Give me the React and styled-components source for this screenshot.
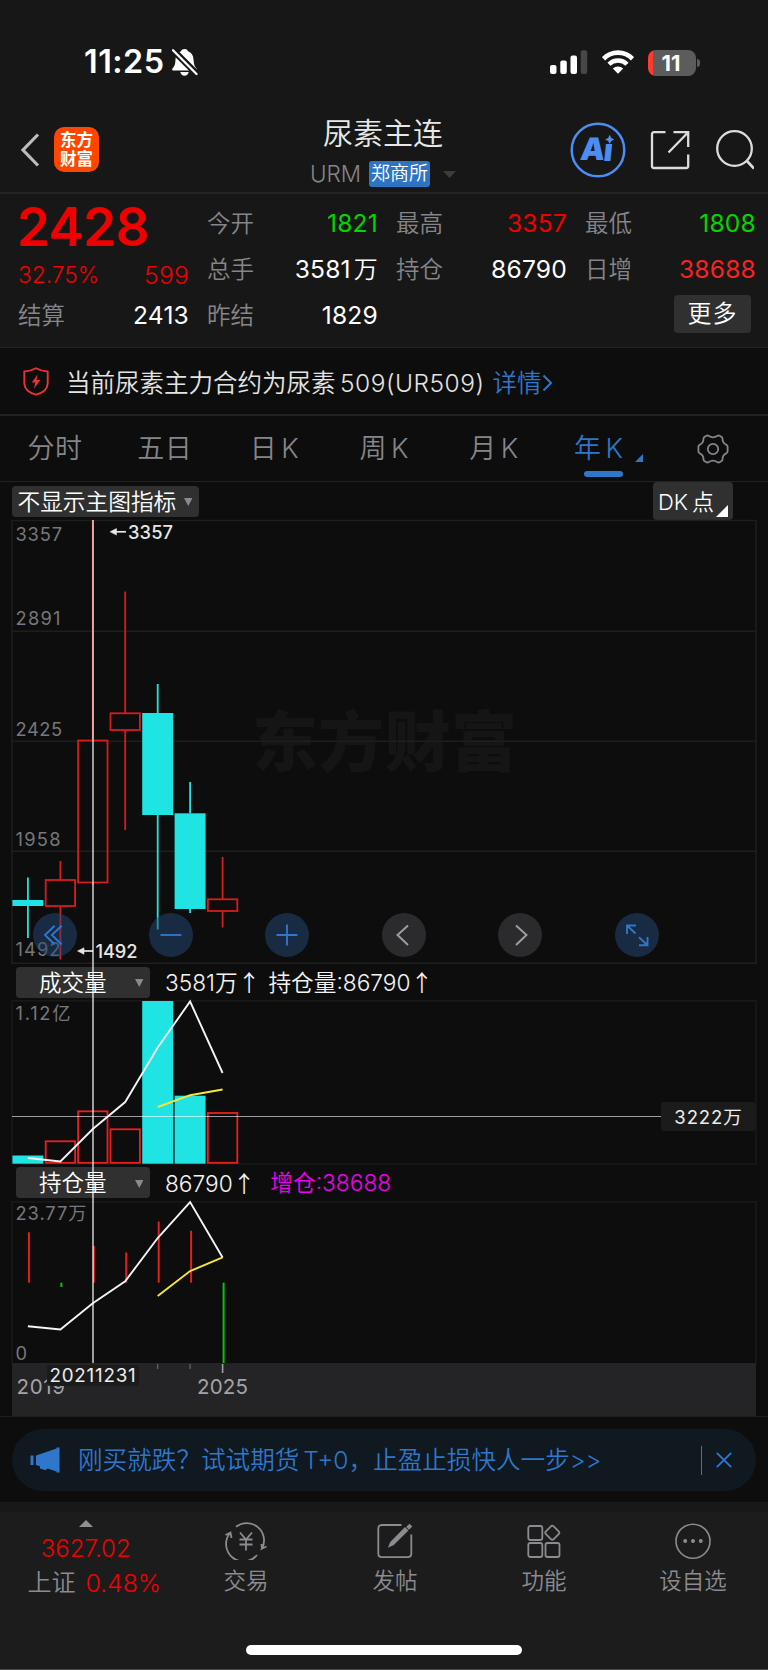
import styled, { createGlobalStyle } from "styled-components";

const X = [27.9, 60.4, 92.8, 125.2, 157.7, 190.1, 222.6];

const candles = [
  { up: false, high: 877.5, top: 900, bottom: 906, low: 938 },
  { up: true, high: 861, top: 880, bottom: 906, low: 959.5 },
  { up: true, high: 520, top: 740.5, bottom: 882.5, low: 885 },
  { up: true, high: 591.5, top: 713.3, bottom: 730, low: 830 },
  { up: false, high: 684, top: 713, bottom: 815, low: 929.5 },
  { up: false, high: 782, top: 813.3, bottom: 909, low: 913 },
  { up: true, high: 857, top: 899.3, bottom: 911, low: 927.5 },
];

const volumes = [
  { up: false, top: 1155.5 },
  { up: true, top: 1141.3 },
  { up: true, top: 1111.3 },
  { up: true, top: 1129.3 },
  { up: false, top: 1001 },
  { up: false, top: 1095.7 },
  { up: true, top: 1113 },
];

const sticks = [
  { up: true, from: 1232.3, to: 1282.7 },
  { up: false, from: 1282.7, to: 1287 },
  { up: true, from: 1246, to: 1282.7 },
  { up: true, from: 1252.5, to: 1282.7 },
  { up: true, from: 1221.5, to: 1282.7 },
  { up: true, from: 1230.7, to: 1282.7 },
  { up: false, from: 1282.7, to: 1363 },
];

const quotes = [
  { label: "今开", value: "1821", color: "#00d600" },
  { label: "最高", value: "3357", color: "#f00000" },
  { label: "最低", value: "1808", color: "#00d600" },
  { label: "总手", value: "3581", unit: "万" },
  { label: "持仓", value: "86790" },
  { label: "日增", value: "38688", color: "#f92222" },
  { label: "昨结", value: "1829" },
];

const tabs = ["分时", "五日", "日K", "周K", "月K", "年K"];

const linePoints = (ys, start = 0) =>
  ys.map((y, i) => `${X[i + start]},${y}`).join(" ");

const Label = ({ x, y, w, size = 18.3, fill = "#77777c", weight, children }) => (
  <text
    x={x}
    y={y}
    fontSize={size}
    fill={fill}
    fontWeight={weight}
    textLength={w}
    lengthAdjust="spacing"
  >
    {children}
  </text>
);

const MutedBell = () => (
  <svg width="26" height="29" viewBox="0 0 26 29">
    <path
      d="M12.5 1c1.8 0 3 .9 3.4 2.3 3.7 1.3 5.3 4.3 5.6 8 .3 5 1 6.8 2.6 8.6 1.4 1.5.6 2.6-.6 2.6h-22c-1.3 0-2-1.2-.6-2.6 1.7-1.7 2.4-3.6 2.6-8.6.2-3.7 1.9-6.7 5.6-8C9.5 1.9 10.7 1 12.5 1z"
      fill="#fff"
    />
    <path d="M8.3 24h8.4c-.4 2.3-2 3.7-4.2 3.7S8.7 26.3 8.3 24z" fill="#fff" />
    <path d="M-1 .2L27 28" stroke="#171717" strokeWidth="6.5" />
    <path d="M1 2.3L24.5 26" stroke="#fff" strokeWidth="2.3" strokeLinecap="round" />
  </svg>
);

const Signal = () => (
  <svg width="38" height="25" viewBox="0 0 38 25">
    <rect x="0" y="15" width="6.5" height="9" rx="2" fill="#fff" />
    <rect x="10.3" y="10.5" width="6.5" height="13.5" rx="2" fill="#fff" />
    <rect x="20.5" y="5.5" width="6.5" height="18.5" rx="2" fill="#fff" />
    <rect x="30.7" y="0.3" width="6.5" height="23.7" rx="2" fill="#474747" />
  </svg>
);

const Wifi = () => (
  <svg width="32" height="25" viewBox="0 0 32 25" fill="none" stroke="#fff">
    <path d="M1.5 8.8C9.5 .6 22.5 .6 30.5 8.8" strokeWidth="4.6" />
    <path d="M7 14.3C12 9.3 20 9.3 25 14.3" strokeWidth="4.4" />
    <path d="M10.8 18.5c3-2.7 7.4-2.7 10.4 0L16 23.8z" fill="#fff" stroke="none" />
  </svg>
);

const Gear = () => (
  <svg width="32" height="30" viewBox="-16 -15 32 30" fill="none" stroke="#85858a" strokeWidth="1.8">
    <path
      strokeLinejoin="round"
      d="M-4.5-13.2Q0-10.2 4.5-13.2Q5.5-13.8 6.6-13.2L8.6-12Q9.5-11.4 9.5-10.3Q9.5-5.8 13.6-4.1Q14.6-3.5 14.6-2.3V2.3Q14.6 3.5 13.6 4.1Q9.5 5.8 9.5 10.3Q9.5 11.4 8.6 12L6.6 13.2Q5.5 13.8 4.5 13.2Q0 10.2-4.5 13.2Q-5.5 13.8-6.6 13.2L-8.6 12Q-9.5 11.4-9.5 10.3Q-9.5 5.8-13.6 4.1Q-14.6 3.5-14.6 2.3V-2.3Q-14.6-3.5-13.6-4.1Q-9.5-5.8-9.5-10.3Q-9.5-11.4-8.6-12L-6.6-13.2Q-5.5-13.8-4.5-13.2Z"
    />
    <circle r="5.2" />
  </svg>
);

const Triangle = ({ w, h, color, dir = "down" }) => (
  <svg width={w} height={h} viewBox="0 0 10 10" preserveAspectRatio="none">
    <path
      d={{ down: "M0 0H10L5 10Z", up: "M0 10H10L5 0Z", corner: "M10 0V10H0Z" }[dir]}
      fill={color}
    />
  </svg>
);

const Candle = ({ i, up, high, top, bottom, low }) => (
  <g stroke={up ? "#d61c1c" : "#20e3e3"} strokeWidth="1.8" fill="none">
    <path d={`M${X[i]} ${high}V${top}M${X[i]} ${bottom}V${low}`} />
    {up ? (
      <rect x={X[i] - 14.7} y={top} width="29.4" height={bottom - top} />
    ) : (
      <rect x={X[i] - 15.5} y={top} width="31" height={bottom - top} fill="#20e3e3" stroke="none" />
    )}
  </g>
);

const MainChart = () => (
  <Canvas height={444} viewBox="0 520 768 444">
    <Watermark x="252" y="766" textLength="265">
      东方财富
    </Watermark>
    <path
      d="M12 520.5H756V963.3H12ZM12 631.3H756M12 741.2H756M12 851.3H756"
      fill="none"
      stroke="#1e1e20"
      strokeWidth="1.5"
    />
    {candles.map((c, i) => (
      <Candle key={i} i={i} {...c} />
    ))}
    <Label x="15.5" y="541" w="46.5">3357</Label>
    <Label x="15.5" y="625" w="45">2891</Label>
    <Label x="15.5" y="735.5" w="46.5">2425</Label>
    <Label x="15.5" y="845.5" w="45">1958</Label>
    <Label x="15.5" y="956.3" w="45">1492</Label>
    <g fill="#e6e6e6" stroke="#e6e6e6" strokeWidth="1.7">
      <path d="M113 531.8H126" />
      <path d="M110 531.8L116.5 528.5V535.1Z" strokeWidth="0.5" />
      <path d="M80 951H93" />
      <path d="M77.5 951L84 947.7V954.3Z" strokeWidth="0.5" />
    </g>
    <Label x="128" y="539" w="45" weight="500" fill="#e6e6e6">3357</Label>
    <Label x="95.5" y="957.8" w="42" weight="500" fill="#e6e6e6">1492</Label>
  </Canvas>
);

const VolumeChart = () => (
  <Canvas height={164} viewBox="0 1000 768 164">
    <path d="M12 1000.8H756V1163.8H12Z" fill="none" stroke="#1c1c1e" strokeWidth="1.3" />
    <Label x="15.5" y="1020" w="55">1.12亿</Label>
    {volumes.map(({ up, top }, i) =>
      up ? (
        <rect
          key={i}
          x={X[i] - 14.7}
          y={top}
          width="29.4"
          height={1162.8 - top}
          fill="none"
          stroke="#ec1f1f"
          strokeWidth="1.8"
        />
      ) : (
        <rect key={i} x={X[i] - 15.5} y={top} width="31" height={1163.7 - top} fill="#20e3e3" />
      )
    )}
    <polyline
      points={linePoints([1158, 1161.5, 1129, 1102, 1047.5, 1001.5, 1073])}
      fill="none"
      stroke="#f4f4f4"
      strokeWidth="1.9"
    />
    <polyline
      points={linePoints([1107, 1095.2, 1089.5], 4)}
      fill="none"
      stroke="#f6e63a"
      strokeWidth="1.9"
    />
  </Canvas>
);

const PositionChart = () => (
  <Canvas height={162} viewBox="0 1201 768 162">
    <path d="M12 1363V1201.8H756V1363" fill="none" stroke="#1c1c1e" strokeWidth="1.3" />
    {sticks.map(({ up, from, to }, i) => (
      <path
        key={i}
        d={`M${X[i] + 1} ${from}V${to}`}
        stroke={up ? "#e81d1d" : "#0bc30b"}
        strokeWidth="2"
      />
    ))}
    <polyline
      points={linePoints([1326.3, 1329.5, 1303.3, 1281.3, 1238, 1202, 1257.5])}
      fill="none"
      stroke="#f4f4f4"
      strokeWidth="1.9"
    />
    <polyline
      points={linePoints([1296, 1271, 1257.3], 4)}
      fill="none"
      stroke="#f6e63a"
      strokeWidth="1.9"
    />
    <Label x="15.5" y="1220.3" w="71">23.77万</Label>
    <Label x="15.5" y="1359.5">0</Label>
  </Canvas>
);

const TimeAxis = () => (
  <AxisBand>
    <Canvas height={53} viewBox="0 1363 768 53">
      <path d="M157.7 1364V1369M190.1 1364V1369" stroke="#77777a" />
      <path d="M222.6 1364V1373" stroke="#a0a0a4" strokeWidth="1.6" />
      <Label x="16.5" y="1393.7" w="48.5" size={20.5} fill="#a3a3a8">2019</Label>
      <Label x="197" y="1393.7" w="51" size={20.5} fill="#a3a3a8">2025</Label>
    </Canvas>
  </AxisBand>
);

const controls = [
  { name: "first", blue: true, d: "M21.7 12.7L12 22L21.7 31.5M28.7 12.7L18.8 22L28.7 31.5" },
  { name: "minus", blue: true, d: "M11.5 22H32.5" },
  { name: "plus", blue: true, d: "M11.5 22H32.5M22 11.5V32.5" },
  { name: "prev", d: "M26 12.5L15.5 22L26 32" },
  { name: "next", d: "M18 12.5L28.5 22L18 32" },
  { name: "expand", blue: true, d: "M12 21V12.5H21M12 12.5L20.5 20.5M24 32.3H32.5V24M32.5 32.3L24 24.3" },
];

const App = () => {
  return (
    <Screen>
      <GlobalStyle />
      <StatusBar>
        <Clock>11:25</Clock>
        <MutedBell />
        <StatusIcons>
          <Signal />
          <Wifi />
          <Battery>11</Battery>
        </StatusIcons>
      </StatusBar>

      <Header>
        <HeaderLeft>
          <svg width="20" height="34" viewBox="0 0 20 34" fill="none" stroke="#bcbcbc" strokeWidth="3.2">
            <path d="M18 1.5L3 17L18 32.5" />
          </svg>
          <Logo>
            <span>东方</span>
            <span>财富</span>
          </Logo>
        </HeaderLeft>
        <TitleBlock>
          <Title>尿素主连</Title>
          <SubTitle>
            URM
            <Exchange>郑商所</Exchange>
            <Triangle w={13} h={7} color="#3c3c3d" />
          </SubTitle>
        </TitleBlock>
        <HeaderRight>
          <svg width="56" height="56" viewBox="0 0 56 56">
            <circle cx="28" cy="28" r="26.3" fill="none" stroke="#4c8df3" strokeWidth="2.5" />
            <g transform="translate(4 0) skewX(-6)">
              <AiText x="9.5" y="38.5">A</AiText>
              <AiText x="33" y="39.5">ı</AiText>
            </g>
            <path d="M39.7 12.8L41.3 15.9L44.3 17.4L41.3 18.9L39.7 22L38.1 18.9L35.1 17.4L38.1 15.9Z" fill="#4c8df3" />
          </svg>
          <svg width="40" height="40" viewBox="0 0 40 40" fill="none" stroke="#dcdcdc" strokeWidth="2.3">
            <path d="M15.5 2.2H4Q2 2.2 2 4.2V36Q2 38 4 38H36.2Q38.2 38 38.2 36V24.5" />
            <path d="M23.5 2.2H38.2V17M38.2 2.2L18.5 22.5" />
          </svg>
          <svg width="40" height="40" viewBox="-1.5 0 40 40" fill="none" stroke="#dcdcdc" strokeWidth="2.3">
            <circle cx="19" cy="18.5" r="17.3" />
            <path d="M31 30.5L38.5 38.5" strokeWidth="2.6" />
          </svg>
        </HeaderRight>
      </Header>

      <QuotePanel>
        <PriceColumn>
          <Price>2428</Price>
          <Change>
            <span>32.75%</span>
            <Diff>599</Diff>
          </Change>
          <Quote>
            <QuoteName>结算</QuoteName>
            <QuoteValue>2413</QuoteValue>
          </Quote>
        </PriceColumn>
        <QuoteGrid>
          {quotes.map(({ label, value, unit, color }) => (
            <Quote key={label}>
              <QuoteName>{label}</QuoteName>
              <QuoteValue $color={color}>
                {value}
                {unit && <Unit>{unit}</Unit>}
              </QuoteValue>
            </Quote>
          ))}
          <MoreCell>
            <MoreButton>更多</MoreButton>
          </MoreCell>
        </QuoteGrid>
      </QuotePanel>

      <Notice>
        <svg width="26" height="29" viewBox="0 0 26 29" fill="none" stroke="#ee3030" strokeWidth="1.9">
          <path
            d="M13 1.3C9.5 3.3 5.5 4.3 1.3 4.5V16C1.3 21.5 6 25.8 13 27.7C20 25.8 24.7 21.5 24.7 16V4.5C20.5 4.3 16.5 3.3 13 1.3Z"
            strokeLinejoin="round"
          />
          <path d="M14.5 7.5L8.7 15.5H12.3L11 21.8L17.3 13H13.5Z" fill="#ee3030" stroke="none" />
        </svg>
        <NoticeText>
          当前尿素主力合约为尿素<Contract>509(UR509)</Contract>
        </NoticeText>
        <DetailLink>
          详情
          <svg width="11" height="18" viewBox="0 0 11 18" fill="none" stroke="#2e77cb" strokeWidth="2">
            <path d="M1.5 1.5L9 9L1.5 16.5" />
          </svg>
        </DetailLink>
      </Notice>

      <Tabs>
        {tabs.map((tab) => (
          <Tab key={tab} $active={tab === "年K"}>
            {tab[0]}
            <TabTail $latin={tab[1] === "K"}>{tab[1]}</TabTail>
            {tab === "年K" && (
              <TabMark>
                <Triangle w={8} h={8} color="#2e77cb" dir="corner" />
              </TabMark>
            )}
          </Tab>
        ))}
        <Tab>
          <Gear />
        </Tab>
      </Tabs>

      <ChartArea>
        <IndicatorBar>
          <IndicatorButton>
            不显示主图指标
            <Triangle w={8.5} h={8} color="#8a8a8e" />
          </IndicatorButton>
          <DkButton>
            <span>DK</span>点
            <DkMark>
              <Triangle w={12} h={12} color="#fff" dir="corner" />
            </DkMark>
          </DkButton>
        </IndicatorBar>

        <MainPane>
          <MainChart />
          <Controls>
            {controls.map(({ name, blue, d }) => (
              <Control key={name} $blue={blue}>
                <svg
                  width="44"
                  height="44"
                  viewBox="0 0 44 44"
                  fill="none"
                  stroke={blue ? "#2e77cb" : "#a0a0a3"}
                  strokeWidth="1.9"
                >
                  <path d={d} />
                </svg>
              </Control>
            ))}
          </Controls>
        </MainPane>

        <PaneHeader $height={36}>
          <PaneSelect>
            成交量
            <Triangle w={8.5} h={8} color="#8a8a8e" />
          </PaneSelect>
          <PaneValue>
            3581万<Arrow>↑</Arrow>
          </PaneValue>
          <PaneValue $gap={8}>
            持仓量:86790<Arrow>↑</Arrow>
          </PaneValue>
        </PaneHeader>
        <VolumeChart />

        <PaneHeader $height={37}>
          <PaneSelect>
            持仓量
            <Triangle w={8.5} h={8} color="#8a8a8e" />
          </PaneSelect>
          <PaneValue>
            86790<Arrow>↑</Arrow>
          </PaneValue>
          <PaneValue $gap={15} $color="#f000f0">
            增仓:38688
          </PaneValue>
        </PaneHeader>
        <PositionChart />
        <TimeAxis />

        <CrosshairX />
        <CrosshairY />
        <VolumeTag>3222万</VolumeTag>
        <DateTag>20211231</DateTag>
      </ChartArea>

      <PromoWrap>
        <Promo>
          <svg width="30" height="26" viewBox="0 0 30 26" fill="#2e77cb">
            <path d="M.5 8.5H3.5V18H.5ZM6 8.5L26.5 1.5V.5H29.5V25.5H26.5V24.5L17.5 21.5L15.5 23.3L10 21.5V19.2L6 18Z" />
          </svg>
          <PromoText>
            刚买就跌？试试期货<PromoLatin>T+0</PromoLatin>，止盈止损快人一步<PromoArrows>&gt;&gt;</PromoArrows>
          </PromoText>
          <PromoClose>
            <svg width="16" height="16" viewBox="0 0 16 16" stroke="#2e77cb" strokeWidth="1.9">
              <path d="M.8.8L15.2 15.2M15.2.8L.8 15.2" />
            </svg>
          </PromoClose>
        </Promo>
      </PromoWrap>

      <BottomBar>
        <IndexCell>
          <Triangle w={14} h={7} color="#909094" dir="up" />
          <IndexPrice>3627.02</IndexPrice>
          <IndexRow>
            上证<IndexChange>0.48%</IndexChange>
          </IndexRow>
        </IndexCell>
        <NavItem>
          <svg width="42" height="38" viewBox="0 0 42 38" fill="none" stroke="#8b8b90" strokeWidth="1.8">
            <path d="M11 4.8A17.3 17.3 0 0 1 37 26.5L41.5 24.5M37 27L36.5 22" />
            <path d="M32 33A17.3 17.3 0 0 1 5 11M.5 13L5.5 10.5L6.5 16" />
            <path d="M15 10.5L21 17.5L27 10.5M21 17.5V28.5M14.5 17.5H27.5M14.5 22.5H27.5" />
          </svg>
          交易
        </NavItem>
        <NavItem>
          <svg width="36" height="38" viewBox="0 0 36 38" fill="none" stroke="#8b8b90" strokeWidth="1.8">
            <path d="M24.5 3H5Q1.3 3 1.3 6.7V31.5Q1.3 35.2 5 35.2H30.5Q34.3 35.2 34.3 31.5V12.5" />
            <path d="M12.5 24L14 20.5L28 6.3L30.2 8.5L16 22.5Z" fill="#8b8b90" />
            <path d="M30.5 5L32.5 3L34 4.5L32 6.5Z" fill="#8b8b90" />
          </svg>
          发帖
        </NavItem>
        <NavItem>
          <svg width="34" height="38" viewBox="0 0 34 38" fill="none" stroke="#8b8b90" strokeWidth="1.8">
            <rect x="1.3" y="4" width="14" height="14" rx="2" />
            <rect x="1.3" y="21" width="14" height="14" rx="2" />
            <rect x="18.5" y="21" width="14" height="14" rx="2" />
            <rect x="19.8" y="5.2" width="11" height="11" rx="2" transform="rotate(45 25.3 10.7)" />
          </svg>
          功能
        </NavItem>
        <NavItem>
          <svg width="38" height="38" viewBox="0 0 38 38" fill="none" stroke="#8b8b90" strokeWidth="1.6">
            <circle cx="19" cy="19.2" r="17" />
            <g fill="#8b8b90" stroke="none">
              <circle cx="11.2" cy="19" r="2" />
              <circle cx="19" cy="19" r="2" />
              <circle cx="26.8" cy="19" r="2" />
            </g>
          </svg>
          设自选
        </NavItem>
        <HomeIndicator />
      </BottomBar>
    </Screen>
  );
};

const GlobalStyle = createGlobalStyle`
  * {
    box-sizing: border-box;
  }

  body {
    margin: 0;
    background: #0d0d0d;
    font-family: Inter, "Noto Sans CJK SC", sans-serif;
  }

  svg {
    display: block;
    flex: none;
  }
`;

const Screen = styled.div`
  display: flex;
  flex-direction: column;
  width: 768px;
  height: 1670px;
  overflow: hidden;
  background: #0d0d0d;
  color: #fff;
  font-weight: 350;
  line-height: 1;
  white-space: nowrap;
`;

const StatusBar = styled.div`
  display: flex;
  align-items: center;
  height: 107px;
  padding: 18px 72px 0 84px;
  background: #171717;
`;

const Clock = styled.span`
  width: 88px;
  font-size: 32.3px;
  font-weight: 600;
  letter-spacing: 0.5px;
`;

const StatusIcons = styled.div`
  display: flex;
  align-items: center;
  gap: 14px;
  margin-left: auto;
`;

const Battery = styled.div`
  position: relative;
  width: 48px;
  height: 26px;
  border-radius: 8px;
  background: linear-gradient(90deg, #ff3b30 5px, #5c5c5c 5px);
  font-size: 22px;
  font-weight: 700;
  line-height: 26px;
  text-align: center;
  padding-right: 2px;

  &::after {
    content: "";
    position: absolute;
    right: -4px;
    top: 9px;
    width: 3px;
    height: 8px;
    border-radius: 0 3px 3px 0;
    background: #5c5c5c;
  }
`;

const Header = styled.header`
  display: grid;
  grid-template-columns: 198px 1fr 198px;
  height: 87px;
  background: #171717;
  border-bottom: 2px solid #242425;
`;

const HeaderLeft = styled.div`
  display: flex;
  align-items: center;
  gap: 14px;
  padding-left: 20px;
`;

const Logo = styled.div`
  display: flex;
  flex-direction: column;
  justify-content: center;
  align-items: center;
  gap: 2.5px;
  width: 45px;
  height: 45px;
  border-radius: 10px;
  background: #ff4600;
  font-size: 16.5px;
  font-weight: 700;
`;

const TitleBlock = styled.div`
  display: flex;
  flex-direction: column;
  align-items: center;
  padding: 9px 2px 0 0;
`;

const Title = styled.h1`
  margin: 0;
  font-size: 30px;
  font-weight: 350;
  line-height: 34px;
  color: #e8e8e8;
`;

const SubTitle = styled.div`
  display: flex;
  align-items: center;
  margin-top: 11px;
  font-size: 22.5px;
  color: #85858a;

  svg {
    margin-left: 13px;
  }
`;

const Exchange = styled.span`
  margin-left: 8px;
  width: 61px;
  height: 26px;
  border-radius: 3px;
  background: #2e74c4;
  color: #fff;
  font-size: 19px;
  line-height: 26px;
  text-align: center;
`;

const HeaderRight = styled.div`
  display: flex;
  align-items: center;
  gap: 24px;
`;

const AiText = styled.text`
  font-size: 31px;
  font-weight: 900;
  fill: #4c8df3;
`;

const QuotePanel = styled.section`
  display: flex;
  gap: 19px;
  height: 154px;
  padding: 6px 13px 0 18px;
  background: #171717;
  border-bottom: 1.5px solid #242425;
`;

const PriceColumn = styled.div`
  width: 170px;
`;

const Price = styled.div`
  height: 52px;
  margin-left: -1px;
  font-size: 53px;
  font-weight: 600;
  line-height: 54px;
  letter-spacing: -0.6px;
  color: #f00000;
`;

const Change = styled.div`
  display: flex;
  justify-content: space-between;
  align-items: center;
  height: 41px;
  padding-top: 6px;
  font-size: 22.7px;
  color: #f00000;
`;

const Diff = styled.span`
  margin-right: -1px;
  font-size: 24.7px;
  letter-spacing: 0.2px;
`;

const QuoteGrid = styled.div`
  display: grid;
  grid-template-columns: repeat(3, 170px);
  grid-auto-rows: 46px;
  column-gap: 19px;
  padding-top: 1px;
`;

const Quote = styled.div`
  display: flex;
  justify-content: space-between;
  align-items: center;
  height: 46px;
`;

const QuoteName = styled.span`
  font-size: 23.5px;
  color: #85858a;
`;

const QuoteValue = styled.span`
  margin: -1px -1px 0 0;
  font-size: 24.6px;
  font-weight: 400;
  letter-spacing: 0.2px;
  color: ${({ $color }) => $color || "#fff"};
`;

const Unit = styled.span`
  margin-left: 3px;
  font-size: 24px;
  font-weight: 350;
`;

const MoreCell = styled.div`
  grid-column: 3;
  display: flex;
  justify-content: flex-end;
  align-items: center;
  padding: 0 4px 4px 0;
`;

const MoreButton = styled.button`
  width: 77px;
  height: 38px;
  padding: 0;
  border: none;
  border-radius: 4px;
  background: #303030;
  color: #fff;
  font: inherit;
  font-size: 24px;
  letter-spacing: 1px;
`;

const Notice = styled.div`
  display: flex;
  align-items: center;
  height: 68px;
  padding: 0 23px;
  border-bottom: 2px solid #222223;
  font-size: 24.5px;
`;

const NoticeText = styled.span`
  margin: 4px 0 0 17px;
  color: #e4e4e4;
`;

const Contract = styled.span`
  margin-left: 4.5px;
  letter-spacing: 0.5px;
`;

const DetailLink = styled.a`
  display: flex;
  align-items: center;
  gap: 1px;
  margin: 4px 0 0 8px;
  color: #2e77cb;
`;

const Tabs = styled.nav`
  display: grid;
  grid-template-columns: repeat(7, 1fr);
  height: 66px;
  border-bottom: 1.5px solid #222223;
`;

const Tab = styled.div`
  position: relative;
  display: flex;
  justify-content: center;
  align-items: center;
  padding-right: ${({ $active }) => ($active ? "10px" : "0")};
  font-size: 27px;
  color: ${({ $active }) => ($active ? "#2e77cb" : "#85858a")};

  &::after {
    content: "";
    position: absolute;
    left: 35.5px;
    bottom: 4px;
    width: 39px;
    height: 6px;
    border-radius: 3px;
    background: ${({ $active }) => ($active ? "#2e77cb" : "transparent")};
  }
`;

const TabTail = styled.span`
  margin-left: ${({ $latin }) => ($latin ? "4.5px" : "0.5px")};
`;

const TabMark = styled.span`
  position: absolute;
  right: 15px;
  bottom: 19px;
`;

const ChartArea = styled.section`
  position: relative;
  height: 935px;
  flex: none;
  border-bottom: 1.5px solid #1f1f20;
`;

const IndicatorBar = styled.div`
  display: flex;
  justify-content: space-between;
  align-items: flex-start;
  height: 38px;
  padding: 0 35px 0 12px;
`;

const IndicatorButton = styled.div`
  display: flex;
  align-items: center;
  gap: 7.5px;
  width: 187px;
  height: 31px;
  margin-top: 4px;
  padding: 1px 0 0 5.5px;
  border-radius: 4px;
  background: #303030;
  font-size: 22.7px;
`;

const DkButton = styled.div`
  position: relative;
  display: flex;
  align-items: center;
  gap: 4px;
  width: 80px;
  height: 38px;
  padding: 1px 0 0 5px;
  border-radius: 4px;
  background: #303030;
  font-size: 22px;
`;

const DkMark = styled.span`
  position: absolute;
  right: 5px;
  bottom: 3px;
`;

const MainPane = styled.div`
  position: relative;
`;

const Canvas = styled.svg.attrs({ width: 768 })`
  overflow: visible;
  font-weight: 400;
`;

const Watermark = styled.text`
  font-size: 66px;
  font-weight: 900;
  fill: #151516;
`;

const Controls = styled.div`
  position: absolute;
  left: 32.7px;
  top: 393px;
  display: flex;
  gap: 72.4px;
`;

const Control = styled.button`
  width: 44px;
  height: 44px;
  padding: 0;
  border: none;
  border-radius: 50%;
  background: ${({ $blue }) => ($blue ? "rgba(35, 73, 119, 0.5)" : "#2b2b2d")};
`;

const PaneHeader = styled.div`
  display: flex;
  align-items: center;
  height: ${({ $height }) => $height}px;
  padding-left: 16px;
`;

const PaneSelect = styled.div`
  display: flex;
  justify-content: space-between;
  align-items: center;
  width: 134px;
  height: 31px;
  margin-right: 15px;
  padding: 2px 7px 0 23px;
  border-radius: 4px;
  background: #303030;
  font-size: 22.5px;
`;

const PaneValue = styled.span`
  margin-left: ${({ $gap }) => $gap || 0}px;
  padding-top: 2px;
  font-size: 22.7px;
  color: ${({ $color }) => $color || "#f4f4f4"};
`;

const Arrow = styled.span`
  font-family: "Noto Sans CJK SC", sans-serif;
`;

const AxisBand = styled.div`
  height: 53px;
  margin: 0 12px;
  background: #242426;

  svg {
    margin-left: -12px;
  }
`;

const CrosshairX = styled.div`
  position: absolute;
  left: 92px;
  top: 38px;
  width: 2px;
  height: 843px;
  background: rgba(255, 255, 255, 0.6);
`;

const CrosshairY = styled.div`
  position: absolute;
  left: 12px;
  top: 634px;
  width: 649px;
  height: 1px;
  background: rgba(255, 255, 255, 0.6);
`;

const VolumeTag = styled.div`
  position: absolute;
  left: 661px;
  top: 620px;
  width: 95px;
  height: 29px;
  border-radius: 3px;
  background: #1b1b1c;
  font-size: 18.5px;
  font-weight: 400;
  line-height: 30px;
  letter-spacing: 0.9px;
  text-align: center;
  color: #ededed;
`;

const DateTag = styled.div`
  position: absolute;
  left: 47px;
  top: 883px;
  width: 92px;
  height: 21px;
  border-radius: 3px;
  background: #1b1b1c;
  font-size: 18.8px;
  font-weight: 400;
  line-height: 22px;
  letter-spacing: 0.8px;
  text-align: center;
  color: #ededed;
`;

const PromoWrap = styled.div`
  height: 85px;
  flex: none;
  padding: 12px 12px 0;
`;

const Promo = styled.div`
  display: flex;
  align-items: center;
  height: 62px;
  padding: 0 24px 0 18px;
  border-radius: 31px;
  background: #101820;
  color: #2e77cb;
`;

const PromoText = styled.span`
  margin-left: 18px;
  padding-top: 1px;
  font-size: 24.6px;
`;

const PromoLatin = styled.span`
  margin-left: 4px;
`;

const PromoArrows = styled.span`
  letter-spacing: -0.5px;
`;

const PromoClose = styled.div`
  display: flex;
  align-items: center;
  height: 29px;
  margin-left: auto;
  padding-left: 14.5px;
  border-left: 1.5px solid #2e77cb;
`;

const BottomBar = styled.footer`
  position: relative;
  display: grid;
  grid-template-columns: 171.5px repeat(4, 149px);
  flex: 1;
  border-top: 10px solid #17181a;
  border-bottom: 1px solid #4a4a4a;
  background: #1c1c1c;
`;

const IndexCell = styled.div`
  display: flex;
  flex-direction: column;
  align-items: center;
  padding-top: 8px;
  font-size: 24px;
  color: #f00000;
`;

const IndexPrice = styled.div`
  height: 24px;
  margin-top: 10px;
`;

const IndexRow = styled.div`
  display: flex;
  align-items: center;
  height: 24px;
  margin: 10px 0 0 17px;
  color: #8b8b90;
`;

const IndexChange = styled.span`
  margin-left: 10px;
  font-size: 24.8px;
  color: #f00000;
`;

const NavItem = styled.div`
  display: flex;
  flex-direction: column;
  align-items: center;
  gap: 10px;
  padding-top: 10px;
  font-size: 22.5px;
  color: #8b8b90;
`;

const HomeIndicator = styled.div`
  position: absolute;
  left: 246px;
  bottom: 14px;
  width: 276px;
  height: 10px;
  border-radius: 5px;
  background: #fff;
`;

export default App;
